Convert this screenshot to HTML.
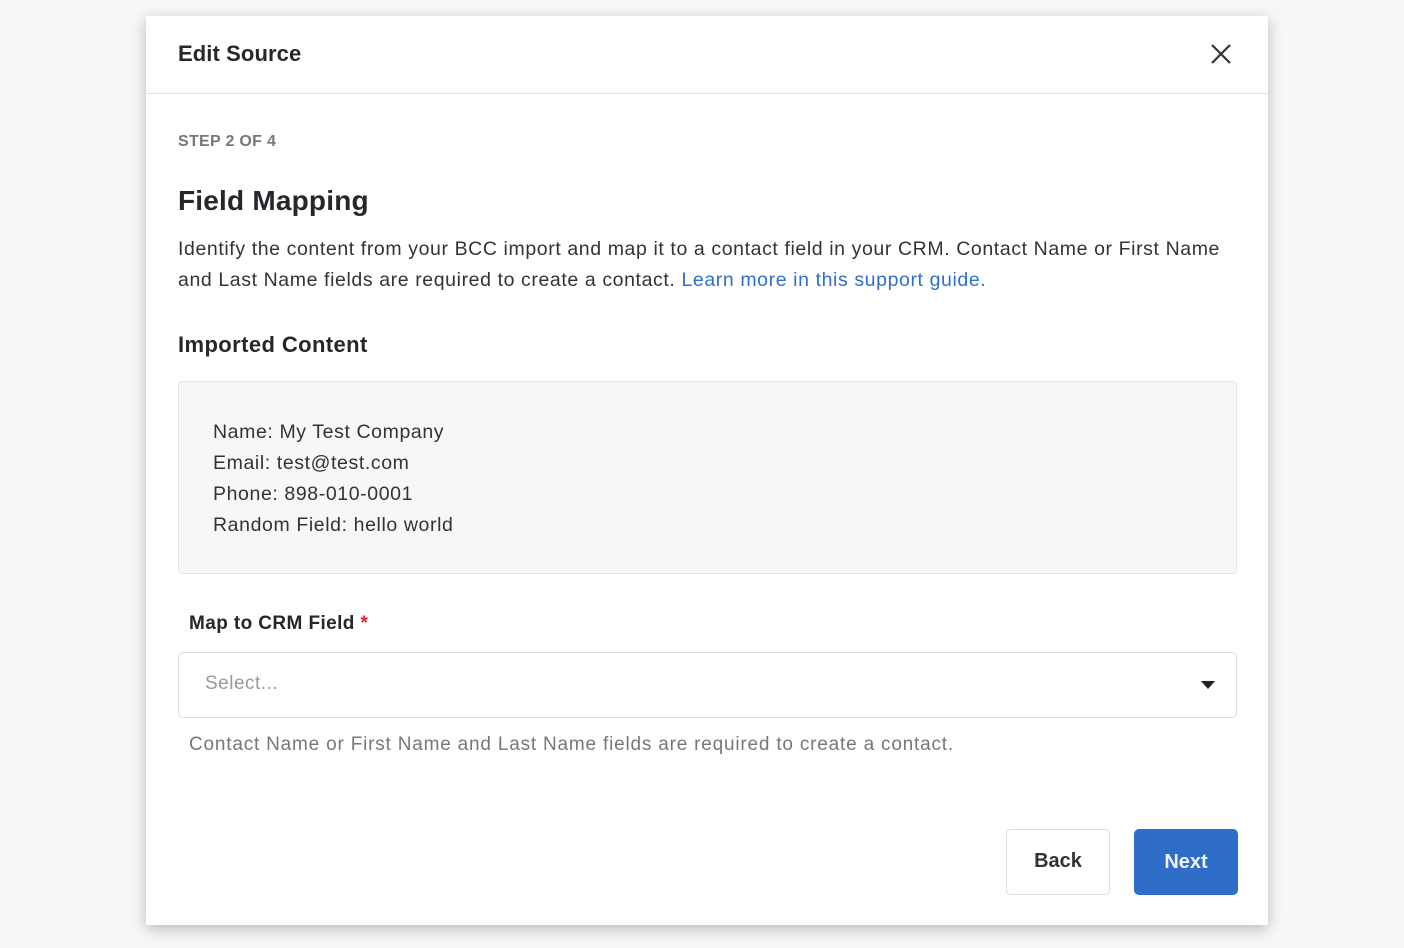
<!DOCTYPE html>
<html><head><style>
*{box-sizing:border-box;margin:0;padding:0}
body{width:1404px;height:948px;background:#f6f7f9;font-family:"Liberation Sans",sans-serif;color:#222;position:relative;overflow:hidden}
.m{position:absolute;left:146px;top:16px;width:1122px;height:909px;background:#fff;box-shadow:0 4px 14px rgba(0,0,0,.25)}
.a{position:absolute;white-space:nowrap}
</style></head><body>
<div class="m">
<div class="a" style="left:32px;top:25px;font-size:22px;font-weight:bold;color:#26272b;letter-spacing:0.1px">Edit Source</div>
<svg class="a" style="left:1064px;top:27px" width="22" height="22" viewBox="0 0 22 22"><path d="M2 2L20 20M20 2L2 20" stroke="#333" stroke-width="2.2"/></svg>
<div class="a" style="left:0;top:77px;width:1122px;height:1px;background:#e3e3e3"></div>
<div class="a" style="left:32px;top:117px;font-size:16px;font-weight:bold;color:#777;letter-spacing:0.3px">STEP 2 OF 4</div>
<div class="a" style="left:32px;top:169px;font-size:28px;font-weight:bold;color:#26272b;letter-spacing:0.2px">Field Mapping</div>
<div class="a" style="left:32px;top:218px;font-size:19.5px;line-height:31px;color:#333;letter-spacing:0.6px">Identify the content from your BCC import and map it to a contact field in your CRM. Contact Name or First Name<br>and Last Name fields are required to create a contact. <span style="color:#2e6fd1">Learn more in this support guide.</span></div>
<div class="a" style="left:32px;top:316px;font-size:22px;font-weight:bold;color:#26272b;letter-spacing:0.4px">Imported Content</div>
<div class="a" style="left:32px;top:365px;width:1059px;height:193px;background:#f7f7f7;border:1px solid #e6e6e6;border-radius:4px"></div>
<div class="a" style="left:67px;top:401px;font-size:19.5px;line-height:31px;color:#333;letter-spacing:0.6px">Name: My Test Company<br>Email: test@test.com<br>Phone: 898-010-0001<br>Random Field: hello world</div>
<div class="a" style="left:43px;top:597px;font-size:19px;font-weight:bold;color:#26272b;letter-spacing:0.4px">Map to CRM Field <span style="color:#d22">*</span></div>
<div class="a" style="left:32px;top:636px;width:1059px;height:66px;border:1.5px solid #ddd;border-radius:5px"></div>
<div class="a" style="left:59px;top:657px;font-size:19px;color:#999;letter-spacing:0.5px">Select...</div>
<svg class="a" style="left:1055px;top:665px" width="14" height="8"><path d="M0 0H14L7 8Z" fill="#222"/></svg>
<div class="a" style="left:43px;top:718px;font-size:19px;color:#777;letter-spacing:0.8px">Contact Name or First Name and Last Name fields are required to create a contact.</div>
<div class="a" style="left:860px;top:813px;width:104px;height:66px;border:1.5px solid #ddd;border-radius:5px;font-size:20px;font-weight:bold;color:#333;text-align:center;line-height:63px">Back</div>
<div class="a" style="left:988px;top:813px;width:104px;height:66px;background:#2e6dc8;border-radius:5px;font-size:20px;font-weight:bold;color:#eef3ff;text-align:center;line-height:66px">Next</div>
</div>
</body></html>
